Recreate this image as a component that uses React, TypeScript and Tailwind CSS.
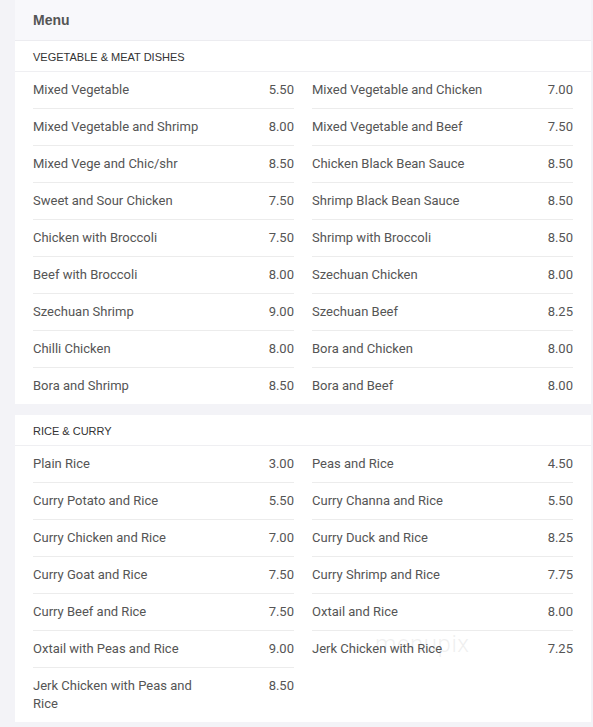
import React from "react";

type Item = { name: string; price: string };

const sections: { title: string; items: Item[] }[] = [
  {
    title: "Vegetable & Meat Dishes",
    items: [
      { name: "Mixed Vegetable", price: "5.50" },
      { name: "Mixed Vegetable and Chicken", price: "7.00" },
      { name: "Mixed Vegetable and Shrimp", price: "8.00" },
      { name: "Mixed Vegetable and Beef", price: "7.50" },
      { name: "Mixed Vege and Chic/shr", price: "8.50" },
      { name: "Chicken Black Bean Sauce", price: "8.50" },
      { name: "Sweet and Sour Chicken", price: "7.50" },
      { name: "Shrimp Black Bean Sauce", price: "8.50" },
      { name: "Chicken with Broccoli", price: "7.50" },
      { name: "Shrimp with Broccoli", price: "8.50" },
      { name: "Beef with Broccoli", price: "8.00" },
      { name: "Szechuan Chicken", price: "8.00" },
      { name: "Szechuan Shrimp", price: "9.00" },
      { name: "Szechuan Beef", price: "8.25" },
      { name: "Chilli Chicken", price: "8.00" },
      { name: "Bora and Chicken", price: "8.00" },
      { name: "Bora and Shrimp", price: "8.50" },
      { name: "Bora and Beef", price: "8.00" }
    ]
  },
  {
    title: "Rice & Curry",
    items: [
      { name: "Plain Rice", price: "3.00" },
      { name: "Peas and Rice", price: "4.50" },
      { name: "Curry Potato and Rice", price: "5.50" },
      { name: "Curry Channa and Rice", price: "5.50" },
      { name: "Curry Chicken and Rice", price: "7.00" },
      { name: "Curry Duck and Rice", price: "8.25" },
      { name: "Curry Goat and Rice", price: "7.50" },
      { name: "Curry Shrimp and Rice", price: "7.75" },
      { name: "Curry Beef and Rice", price: "7.50" },
      { name: "Oxtail and Rice", price: "8.00" },
      { name: "Oxtail with Peas and Rice", price: "9.00" },
      { name: "Jerk Chicken with Rice", price: "7.25" },
      { name: "Jerk Chicken with Peas and Rice", price: "8.50" }
    ]
  }
];

function MenuRow({ item, first }: { item: Item; first: boolean }) {
  return (
    <div
      className={`flex justify-between py-[9px] text-[13px] leading-[18px] text-[#555] ${
        first ? "border-t border-transparent" : "border-t border-[#ececec]"
      }`}
    >
      <span className="w-[70%]">{item.name}</span>
      <span>{item.price}</span>
    </div>
  );
}

export default function App() {
  return (
    <div className="min-h-[727px] bg-[#f3f3f7] pl-[15px] pr-[2px] pb-[5px] font-['Roboto',sans-serif]">
      <div className="bg-white">
        <div className="h-[41px] bg-[#f8f8fb] border-b border-[#ececf0] px-[18px] flex items-center">
          <h1 className="font-['Liberation_Sans',Arial,sans-serif] font-bold text-[14px] text-[#555]">
            Menu
          </h1>
        </div>

        {sections.map((section, si) => (
          <div key={section.title} className={si > 0 ? "border-t-[11px] border-[#f3f3f7]" : ""}>
            <div className="h-[31px] border-b border-[#efeff2] px-[18px] pt-[3px] flex items-center font-['Liberation_Sans',Arial,sans-serif] text-[11px] uppercase text-[#333]">
              {section.title}
            </div>
            <div className="relative grid grid-cols-2 gap-x-[18px] px-[18px]">
              {[0, 1].map(col => (
                <div key={col} className="-mt-px">
                  {section.items
                    .filter((_, i) => i % 2 === col)
                    .map((item, i) => (
                      <MenuRow key={item.name} item={item} first={i === 0} />
                    ))}
                </div>
              ))}
              {si === 1 && (
                <div className="pointer-events-none absolute left-[360px] top-[180px] text-[24px] font-light tracking-wide text-[#000] opacity-[0.06] select-none">
                  menupix
                </div>
              )}
            </div>
          </div>
        ))}
      </div>
    </div>
  );
}
